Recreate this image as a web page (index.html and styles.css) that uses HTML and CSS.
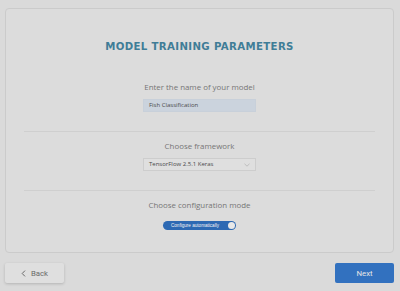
FILE: index.html
```html
<!DOCTYPE html>
<html>
<head>
<meta charset="utf-8">
<link rel="stylesheet" href="styles.css">
</head>
<body>
<div class="card">
  <h1 class="title">MODEL TRAINING PARAMETERS</h1>
  <div class="section first">
    <div class="label">Enter the name of your model</div>
    <div class="input">Fish Classification</div>
  </div>
  <div class="section">
    <div class="label">Choose framework</div>
    <div class="select"><span>TensorFlow 2.5.1 Keras</span>
      <svg class="chev" width="6" height="4" viewBox="0 0 6 4"><path d="M0.5 0.8 L3 3.2 L5.5 0.8" fill="none" stroke="#b5b5b5" stroke-width="0.8"/></svg>
    </div>
  </div>
  <div class="section last">
    <div class="label">Choose configuration mode</div>
    <div class="toggle"><span class="ttext">Configure automatically</span><span class="knob"></span></div>
  </div>
</div>
<div class="footer">
  <button class="btn back"><svg width="5" height="7" viewBox="0 0 5 7"><path d="M4 0.6 L1.2 3.5 L4 6.4" fill="none" stroke="#6a6a6a" stroke-width="1"/></svg><span>Back</span></button>
  <button class="btn next">Next</button>
</div>
</body>
</html>
```
FILE: styles.css
```css
html, body { margin: 0; padding: 0; }
body {
  width: 400px; height: 291px; overflow: hidden;
  background: #dadada;
  font-family: "Open Sans", "Noto Sans", sans-serif;
}
.card {
  box-sizing: border-box;
  margin: 8px 6px 0 5px;
  height: 245px;
  border: 1px solid #cbcbcb;
  border-radius: 4px;
  background: #dcdcdc;
  padding: 0 18px;
  display: flex; flex-direction: column; align-items: stretch;
}
.title {
  margin: 30px 0 0;
  font-family: "DejaVu Sans", sans-serif;
  font-weight: bold;
  font-size: 10.2px;
  line-height: 16px;
  letter-spacing: 0.35px;
  color: #3f7d97;
  text-align: center;
}
.section {
  display: flex; flex-direction: column; align-items: center;
  padding: 8px 0 19px;
  border-bottom: 1px solid #cfcfcf;
}
.section.first { padding-top: 26px; }
.section.last { border-bottom: none; padding-bottom: 0; }
.label {
  font-size: 7.9px; line-height: 12px; color: #767676;
}
.input, .select {
  box-sizing: border-box;
  margin-top: 6px;
  width: 113px; height: 13px;
  font-size: 6px; line-height: 13px;
  padding: 0 5px;
  color: #4a4a4a;
  display: flex; align-items: center; justify-content: space-between;
  font-family: "Open Sans", sans-serif;
}
.input { background: #cbd3dd; border: 1px solid #c8d0da; }
.select { background: #dfdfdf; border: 1px solid #cdcdcd; }
.chev { display: block; }
.toggle {
  margin-top: 10px;
  box-sizing: border-box;
  width: 73px; height: 9px;
  border-radius: 5px;
  background: #2d69b3;
  display: flex; align-items: center; justify-content: space-between;
  padding: 0 1px 0 8px;
}
.ttext { color: #f2f2f2; font-size: 4.6px; line-height: 9px; white-space: nowrap; font-family: "Liberation Sans", sans-serif; }
.knob {
  box-sizing: border-box;
  width: 7px; height: 7px; border-radius: 50%;
  background: #e8e8e8;
}
.footer {
  display: flex; justify-content: space-between;
  margin: 10px 6px 0 5px;
}
.btn {
  box-sizing: border-box;
  height: 20px;
  border: none; border-radius: 2px;
  font-family: Roboto, sans-serif; font-size: 7.8px;
  display: flex; align-items: center; justify-content: center;
  padding: 0;
}
.back {
  width: 59px; background: #dfdfdf; color: #6a6a6a;
  box-shadow: 0 1px 3px rgba(0,0,0,0.18);
  gap: 5px;
}
.back svg { display: block; }
.next { width: 59px; background: #3271bf; color: #e6e6e6; }
```
